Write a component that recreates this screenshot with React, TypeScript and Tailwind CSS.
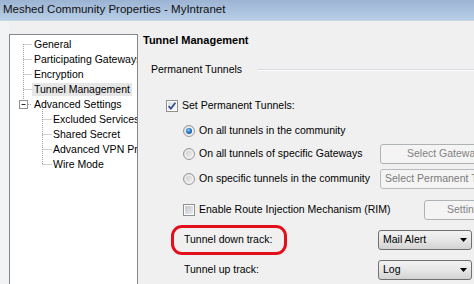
import React from "react";

const FONT = "font-['Liberation_Sans','Arial',sans-serif]";

function CheckBox({ checked }: { checked: boolean }) {
  return (
    <svg width="12" height="12" viewBox="0 0 12 12" className="shrink-0">
      <defs>
        <linearGradient id={checked ? "cbg1" : "cbg2"} x1="0" y1="0" x2="1" y2="1">
          <stop offset="0" stopColor={checked ? "#d9dde3" : "#c4c7cc"} />
          <stop offset="1" stopColor={checked ? "#fafafa" : "#e8e9eb"} />
        </linearGradient>
      </defs>
      <rect x="0.5" y="0.5" width="11" height="11" fill="#ffffff" stroke="#8e8f8f" />
      <rect x="2" y="2" width="8" height="8" fill={`url(#${checked ? "cbg1" : "cbg2"})`} />
      {checked && (
        <path d="M2.6 6.2 L4.9 8.6 L9.4 2.8" fill="none" stroke="#2f4f8f" strokeWidth="1.7" />
      )}
    </svg>
  );
}

function Radio({ selected }: { selected: boolean }) {
  return (
    <svg width="12" height="12" viewBox="0 0 12 12" className="shrink-0">
      <defs>
        <linearGradient id="rbg" x1="0" y1="0" x2="1" y2="1">
          <stop offset="0" stopColor="#c9cbcf" />
          <stop offset="1" stopColor="#f3f3f3" />
        </linearGradient>
        <radialGradient id="rdot" cx="0.4" cy="0.35" r="0.7">
          <stop offset="0" stopColor="#8ad0f5" />
          <stop offset="0.5" stopColor="#2f83cc" />
          <stop offset="1" stopColor="#1a4d8c" />
        </radialGradient>
      </defs>
      <circle cx="6" cy="6" r="5.5" fill="url(#rbg)" stroke="#9a9a9a" />
      <circle cx="6" cy="6" r="4" fill="none" stroke="#f8f8f8" strokeWidth="0.8" />
      {selected && <circle cx="6" cy="6" r="3" fill="url(#rdot)" />}
    </svg>
  );
}

function Dropdown({ label }: { label: string }) {
  return (
    <div className="flex h-[20px] w-[94px] items-center justify-between rounded-[3px] border border-[#707070] bg-gradient-to-b from-[#f3f3f3] via-[#e6e6e6] to-[#d3d3d3] pl-[4px] pr-[4px] text-black">
      <span>{label}</span>
      <svg width="7" height="4" viewBox="0 0 7 4">
        <path d="M0 0 H7 L3.5 4 Z" fill="#000" />
      </svg>
    </div>
  );
}

const treeRoot = ["General", "Participating Gateways", "Encryption", "Tunnel Management"];
const treeChild = ["Excluded Services", "Shared Secret", "Advanced VPN Properties", "Wire Mode"];

function Tree() {
  return (
    <div className="relative mt-[13px] h-[260px] w-[129px] shrink-0 overflow-hidden border border-[#828790] bg-white pt-[2px]">
      <svg className="absolute left-0 top-0" width="127" height="260" viewBox="0 0 127 260">
        <g stroke="#a0a0a0" strokeWidth="1" strokeDasharray="1 1" fill="none">
          <path d="M13.5 9 V65" />
          <path d="M13.5 9.5 H22" />
          <path d="M13.5 24.5 H22" />
          <path d="M13.5 39.5 H22" />
          <path d="M13.5 54.5 H22" />
          <path d="M18 69.5 H22" />
          <path d="M32.5 74 V129" />
          <path d="M32.5 84.5 H42" />
          <path d="M32.5 99.5 H42" />
          <path d="M32.5 114.5 H42" />
          <path d="M32.5 129.5 H42" />
        </g>
        <rect x="9.5" y="65.5" width="8" height="8" fill="#fff" stroke="#919191" />
        <path d="M11.5 69.5 H15.5" stroke="#2b2b2b" strokeWidth="1" />
      </svg>
      <div className="relative flex flex-col whitespace-nowrap text-black">
        {treeRoot.map((t) => (
          <div key={t} className="flex h-[15px] items-center pl-[22px]">
            <span
              className={
                t === "Tunnel Management"
                  ? "bg-[#e6e6e6] px-[2px] leading-[13px]"
                  : "px-[2px] leading-[13px]"
              }
            >
              {t}
            </span>
          </div>
        ))}
        <div className="flex h-[15px] items-center pl-[22px]">
          <span className="px-[2px] leading-[13px]">Advanced Settings</span>
        </div>
        {treeChild.map((t) => (
          <div key={t} className="flex h-[15px] items-center pl-[41px]">
            <span className="px-[2px] leading-[13px]">{t}</span>
          </div>
        ))}
      </div>
    </div>
  );
}

export default function App() {
  return (
    <div className={`${FONT} h-[284px] w-[474px] overflow-hidden bg-[#f0f0f0] text-[10.5px]`}>
      <div className="flex h-[21px] items-center border-b border-[#c6d6e8] bg-gradient-to-b from-[#9cb3d3] to-[#b8cfe8] pl-[3px] text-[11.5px] text-[#111]">
        Meshed Community Properties - MyIntranet
      </div>
      <div className="flex">
        <div className="w-[9px] shrink-0 self-stretch bg-[#f2f3f5]" />
        <Tree />
        <div className="flex min-w-0 flex-1 flex-col pt-[12px] text-black">
          <div className="flex h-[14px] items-center pl-[5px] text-[11px] font-bold">Tunnel Management</div>
          <div className="mt-[16px] flex h-[14px] items-center pl-[13px]">
            <span className="w-[107px] shrink-0">Permanent Tunnels</span>
            <div className="h-[2px] flex-1 border-t border-b border-t-[#d5dbe0] border-b-white" />
          </div>
          <div className="mt-[21px] flex h-[16px] items-center gap-[4px] pl-[28px]">
            <CheckBox checked />
            <span>Set Permanent Tunnels:</span>
          </div>
          <div className="mt-[9px] flex h-[16px] items-center gap-[4px] pl-[45px]">
            <Radio selected />
            <span>On all tunnels in the community</span>
          </div>
          <div className="mt-[5px] flex h-[20px] items-center">
            <div className="flex w-[242px] shrink-0 items-center gap-[4px] pl-[45px]">
              <Radio selected={false} />
              <span className="whitespace-nowrap">On all tunnels of specific Gateways</span>
            </div>
            <div className="flex h-[20px] w-[130px] shrink-0 items-center rounded-[3px] border border-[#adb2b5] bg-[#f4f4f4] pl-[26px] text-[#838383]">
              Select Gateways...
            </div>
          </div>
          <div className="mt-[5px] flex h-[20px] items-center">
            <div className="flex w-[242px] shrink-0 items-center gap-[4px] pl-[45px]">
              <Radio selected={false} />
              <span className="whitespace-nowrap">On specific tunnels in the community</span>
            </div>
            <div className="flex h-[20px] w-[130px] shrink-0 items-center rounded-[3px] border border-[#b8bcc0] bg-[#f4f4f4] pl-[4px] text-[#7a7a7a]">
              Select Permanent Tunnels
            </div>
          </div>
          <div className="mt-[11px] flex h-[20px] items-center">
            <div className="flex w-[286px] shrink-0 items-center gap-[4px] pl-[45px]">
              <CheckBox checked={false} />
              <span className="whitespace-nowrap">Enable Route Injection Mechanism (RIM)</span>
            </div>
            <div className="flex h-[20px] w-[80px] shrink-0 items-center rounded-[3px] border border-[#adb2b5] bg-[#f4f4f4] pl-[22px] text-[#838383]">
              Settings...
            </div>
          </div>
          <div className="relative mt-[10px] flex h-[20px] items-center">
            <div className="w-[240px] shrink-0 pl-[46px]">Tunnel down track:</div>
            <Dropdown label="Mail Alert" />
            <div className="pointer-events-none absolute left-[33px] top-[-5px] h-[30px] w-[116px] rounded-[11px] border-[3px] border-[#e3101c]" />
          </div>
          <div className="mt-[10px] flex h-[20px] items-center">
            <div className="w-[240px] shrink-0 pl-[46px]">Tunnel up track:</div>
            <Dropdown label="Log" />
          </div>
        </div>
      </div>
    </div>
  );
}
